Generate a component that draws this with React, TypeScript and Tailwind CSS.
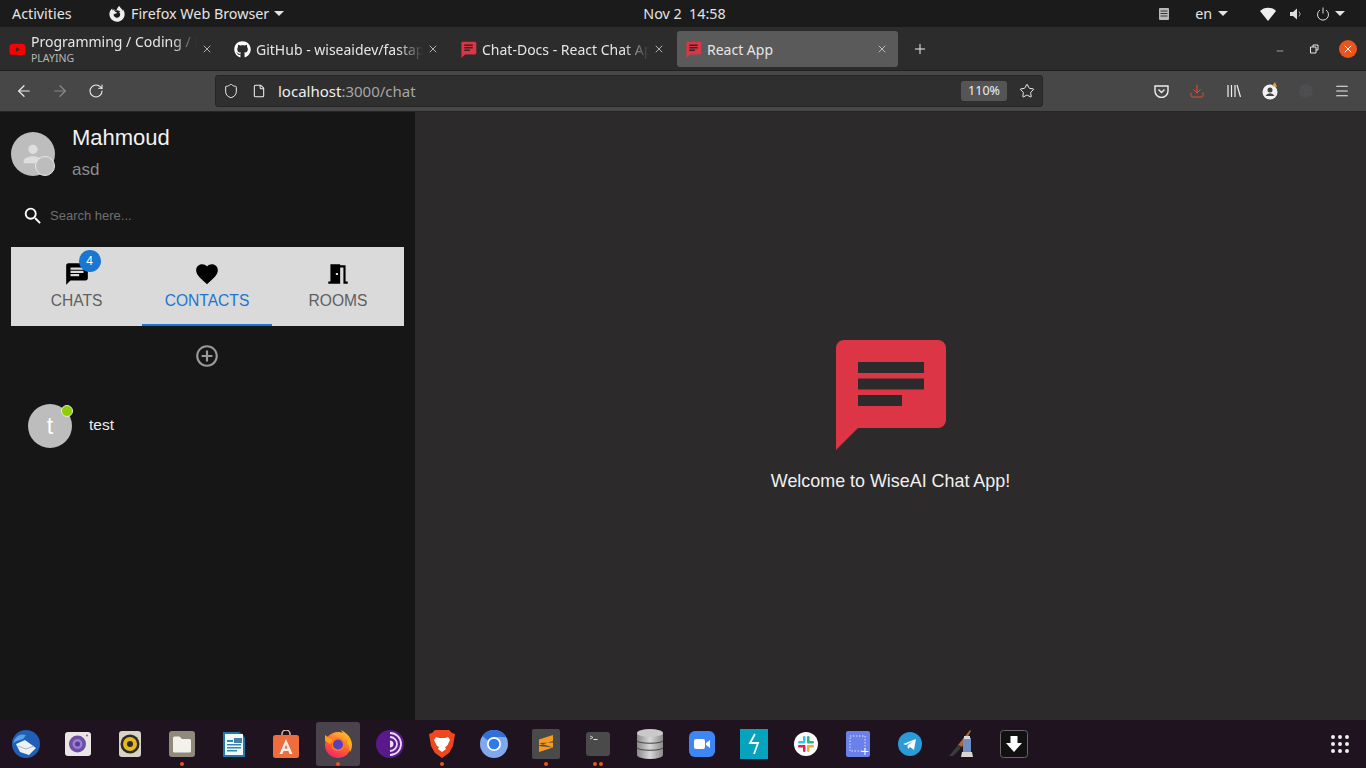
import { ArrowLeft, ArrowRight, RotateCw, Shield, File, Star, Download, Menu, X, Plus, Minus } from "lucide-react";
import { FaGithub, FaYoutube, FaFirefoxBrowser } from "react-icons/fa";
import { MdChat, MdFavorite, MdMeetingRoom, MdAddCircleOutline, MdPerson, MdSearch } from "react-icons/md";

const uiFont = "font-['Noto_Sans','Open_Sans',sans-serif]";

const ChatIcon = ({ size = 18 }: { size?: number }) => (
    <svg width={size} height={size} viewBox="0 0 24 24">
        <path d="M3 1h18a2 2 0 0 1 2 2v14a2 2 0 0 1-2 2H7l-5 5V3a2 2 0 0 1 1-2z" fill="#dc3545" />
        <path d="M6 5h12v2H6zM6 8.500h12v2H6zM6 12h8v2H6z" fill="#2c2a2b" />
    </svg>
);

const Tab = ({ title, sub, icon, w, active }: { title: string; sub?: string; icon: React.ReactNode; w: string; active?: boolean }) => (
    <div className={`flex h-9 shrink-0 items-center rounded-[3px] ${w} ${active ? "bg-[#5a5a5a] pl-[8px]" : "pl-[9px]"}`}>
        <div className="mr-[5px] flex w-[17px] justify-center">{icon}</div>
        <div className={`min-w-0 flex-1 overflow-hidden whitespace-nowrap ${sub ? "" : "pt-[2px]"}`}>
            <div className={`text-[14px] leading-[18px] text-[#e6e6e6] ${active ? "" : "[mask-image:linear-gradient(to_right,black_85%,transparent)]"}`}>{title}</div>
            {sub && <div className="mt-[1px] text-[10.5px] leading-[13px] text-[#b8b8b8]">{sub}</div>}
        </div>
        <X size={12} strokeWidth={1.5} className={`ml-[4px] shrink-0 text-[#dddddd] ${active ? "mr-[10px]" : "mr-[12px]"}`} />
    </div>
);

const dockIcons: { key: string; dots?: number; active?: boolean; node: React.ReactNode }[] = [
    {
        key: "thunderbird",
        node: (
            <svg width="30" height="30" viewBox="0 0 30 30">
                <circle cx="15" cy="15" r="14" fill="#1f5fb5" />
                <path d="M2 14C4 7 10 4 15 6l-3 4-6 2z" fill="#5aa2e6" />
                <path d="M5 15l9-4 11 8-7 7-9-3z" fill="#eef2f7" />
                <path d="M7 17l8 3 8-3" stroke="#a9b6c8" fill="none" />
            </svg>
        ),
    },
    {
        key: "cheese",
        node: (
            <svg width="26" height="24" viewBox="0 0 26 24">
                <rect width="26" height="24" y="0" rx="3" fill="#e9e6e6" />
                <circle cx="12.500" cy="12" r="8.500" fill="#6d4ea5" />
                <circle cx="12.500" cy="12" r="5" fill="#9a7fd0" />
                <circle cx="12.500" cy="12" r="2.500" fill="#5a3c92" />
                <circle cx="22" cy="3.500" r="1" fill="#d64550" />
            </svg>
        ),
    },
    {
        key: "rhythmbox",
        node: (
            <svg width="22" height="26" viewBox="0 0 22 26">
                <rect width="22" height="26" rx="3" fill="#d8d3c4" />
                <circle cx="11" cy="13" r="9.500" fill="#2c2a26" />
                <circle cx="11" cy="13" r="7" fill="#e6b91e" />
                <circle cx="11" cy="13" r="3" fill="#2c2a26" />
            </svg>
        ),
    },
    {
        key: "files",
        dots: 1,
        node: (
            <svg width="26" height="26" viewBox="0 0 26 26">
                <rect width="26" height="26" rx="3" fill="#8f8a7b" />
                <path d="M4 7a1.500 1.500 0 0 1 1.500-1.500h5L13 8h7.500A1.500 1.500 0 0 1 22 9.500V20a1.500 1.500 0 0 1-1.500 1.500h-15A1.500 1.500 0 0 1 4 20z" fill="#f3f1ec" />
            </svg>
        ),
    },
    {
        key: "writer",
        node: (
            <svg width="22" height="26" viewBox="0 0 22 26">
                <path d="M0 1h16l6 6v18a1 1 0 0 1-1 1H1a1 1 0 0 1-1-1z" fill="#1f7ba8" />
                <path d="M16 0l6 6h-6z" fill="#135b80" />
                <rect x="2" y="3" width="18" height="21" fill="#f5f8fa" />
                <rect x="4" y="9" width="6" height="2" fill="#2b87b6" />
                <rect x="4" y="13" width="14" height="1.500" fill="#2b87b6" />
                <rect x="4" y="16" width="14" height="1.500" fill="#2b87b6" />
                <rect x="4" y="19" width="10" height="1.500" fill="#2b87b6" />
                <rect x="11" y="7" width="8" height="5" fill="#4b7fa3" />
            </svg>
        ),
    },
    {
        key: "software",
        node: (
            <svg width="26" height="28" viewBox="0 0 26 28">
                <path d="M9 6V4a4 4 0 0 1 8 0v2" stroke="#e6b8a0" strokeWidth="1.500" fill="none" />
                <rect y="5" width="26" height="23" rx="2.500" fill="#ed6d3c" />
                <path d="M13 9l6.500 15h-3l-1-3h-5l-1 3h-3zM13 14.500l-1.500 4h3z" fill="#f8ede6" />
            </svg>
        ),
    },
    {
        key: "firefox",
        dots: 1,
        active: true,
        node: <FirefoxLogo />,
    },
    {
        key: "tor",
        node: (
            <svg width="28" height="28" viewBox="0 0 28 28">
                <circle cx="14" cy="14" r="14" fill="#59198a" />
                <path d="M14 3a11 11 0 0 1 0 22" stroke="#e9d9f5" strokeWidth="1.800" fill="none" />
                <path d="M14 7a7 7 0 0 1 0 14" stroke="#e9d9f5" strokeWidth="1.800" fill="none" />
                <path d="M14 10.500a3.500 3.500 0 0 1 0 7z" fill="#e9d9f5" />
            </svg>
        ),
    },
    {
        key: "brave",
        dots: 1,
        node: (
            <svg width="26" height="28" viewBox="0 0 26 28">
                <path d="M6 0h14l3 3 3 1-2 12-4 7-7 5-7-5-4-7L0 4l3-1z" fill="#f0471f" />
                <path d="M7 7l3 1h6l3-1 2 3-3 6-2 1 1 2-4 3-4-3 1-2-2-1-3-6z" fill="#fff" />
            </svg>
        ),
    },
    {
        key: "chromium",
        node: (
            <svg width="28" height="28" viewBox="0 0 28 28">
                <circle cx="14" cy="14" r="14" fill="#7fa8ef" />
                <path d="M14 0a14 14 0 0 1 12.100 7H14a7 7 0 0 0-6 3.500L2.400 6A14 14 0 0 1 14 0z" fill="#2f6fdb" />
                <circle cx="14" cy="14" r="7" fill="#fff" />
                <circle cx="14" cy="14" r="5.300" fill="#2f7bea" />
            </svg>
        ),
    },
    {
        key: "sublime",
        dots: 1,
        node: (
            <svg width="28" height="30" viewBox="0 0 28 30">
                <rect width="28" height="30" rx="2" fill="#4a4a4a" />
                <path d="M21 6v6L7 16.500v-6zM7 14l14 4.500v-5zM21 18.500L7 23v-6z" fill="#f89a1c" />
            </svg>
        ),
    },
    {
        key: "terminal",
        dots: 2,
        node: (
            <svg width="24" height="24" viewBox="0 0 24 24">
                <rect width="24" height="24" rx="3" fill="#4a4a4a" />
                <path d="M4 4l3 1.500L4 7" stroke="#e6e6e6" strokeWidth="0.800" fill="none" />
                <rect x="7.500" y="7" width="4" height="1" fill="#e6e6e6" />
            </svg>
        ),
    },
    {
        key: "database",
        node: (
            <svg width="26" height="30" viewBox="0 0 26 30">
                <defs>
                    <linearGradient id="db" x1="0" y1="0" x2="1" y2="0">
                        <stop offset="0" stopColor="#8a8a8a" />
                        <stop offset="0.500" stopColor="#d8d8d8" />
                        <stop offset="1" stopColor="#8a8a8a" />
                    </linearGradient>
                </defs>
                <rect y="4" width="26" height="22" fill="url(#db)" />
                <ellipse cx="13" cy="26" rx="13" ry="4" fill="url(#db)" />
                <path d="M0 12c3 3 23 3 26 0M0 19c3 3 23 3 26 0" stroke="#444" fill="none" />
                <ellipse cx="13" cy="4" rx="13" ry="4" fill="#c9c9c9" />
            </svg>
        ),
    },
    {
        key: "zoom",
        node: (
            <svg width="26" height="26" viewBox="0 0 26 26">
                <rect width="26" height="26" rx="6" fill="#3f86f5" />
                <rect x="5" y="8" width="11" height="10" rx="2" fill="#fff" />
                <path d="M17 12l4-3v8l-4-3z" fill="#fff" />
            </svg>
        ),
    },
    {
        key: "postman",
        node: (
            <svg width="28" height="30" viewBox="0 0 28 30">
                <rect width="28" height="30" fill="#05a3bd" />
                <path d="M15 5l-5 9h8l-4 11" stroke="#fff" strokeWidth="1.800" fill="none" />
            </svg>
        ),
    },
    {
        key: "slack",
        node: (
            <svg width="24" height="24" viewBox="0 0 24 24">
                <circle cx="12" cy="12" r="12" fill="#fff" />
                <rect x="9" y="4" width="2.500" height="7" rx="1.200" fill="#36c5f0" />
                <rect x="4" y="9" width="7" height="2.500" rx="1.200" fill="#36c5f0" />
                <rect x="13" y="4" width="2.500" height="7" rx="1.200" fill="#2eb67d" />
                <rect x="13" y="9" width="7" height="2.500" rx="1.200" fill="#2eb67d" />
                <rect x="13" y="13" width="7" height="2.500" rx="1.200" fill="#ecb22e" />
                <rect x="13" y="13" width="2.500" height="7" rx="1.200" fill="#ecb22e" />
                <rect x="9" y="13" width="2.500" height="7" rx="1.200" fill="#e01e5a" />
                <rect x="4" y="13" width="7" height="2.500" rx="1.200" fill="#e01e5a" />
            </svg>
        ),
    },
    {
        key: "screenshot",
        node: (
            <svg width="24" height="26" viewBox="0 0 24 26">
                <rect width="24" height="26" rx="2" fill="#6a80ea" />
                <rect x="4" y="5" width="15" height="15" fill="none" stroke="#dfe5ff" strokeDasharray="1.500 1.500" />
                <path d="M19 17v7M15.500 20.500h7" stroke="#fff" />
            </svg>
        ),
    },
    {
        key: "telegram",
        node: (
            <svg width="24" height="24" viewBox="0 0 24 24">
                <circle cx="12" cy="12" r="12" fill="#2a9bd6" />
                <path d="M5 12l13-5-2 11-4-3-2 2-.500-3.500 5.500-4.500-7 4z" fill="#fff" />
            </svg>
        ),
    },
    {
        key: "gimp",
        node: (
            <svg width="26" height="28" viewBox="0 0 26 28">
                <path d="M0 26l9-11 3 3-8 8z" fill="#3a3a3a" />
                <path d="M9 15l12-15 1 1-9 16z" fill="#a8683a" />
                <rect x="14" y="8" width="8" height="14" fill="#6f8fc4" />
                <rect x="15" y="6" width="6" height="3" fill="#d8d8d8" />
                <path d="M13 22h10l1 5H12z" fill="#d9d6cd" />
            </svg>
        ),
    },
    {
        key: "downloader",
        node: (
            <svg width="28" height="28" viewBox="0 0 28 28">
                <rect x="0.500" y="0.500" width="27" height="27" rx="3" fill="#111" stroke="#666" />
                <path d="M10.500 6h7v7H22l-8 9-8-9h4.500z" fill="#fff" />
            </svg>
        ),
    },
];

function FirefoxLogo() {
    return (
        <svg width="28" height="28" viewBox="0 0 28 28">
            <defs>
                <linearGradient id="ff" x1="0.800" y1="0" x2="0.300" y2="1">
                    <stop offset="0" stopColor="#ffc52e" />
                    <stop offset="0.550" stopColor="#ff5f2e" />
                    <stop offset="1" stopColor="#f0246e" />
                </linearGradient>
            </defs>
            <circle cx="14" cy="15" r="13" fill="url(#ff)" />
            <path d="M17 0c6 3 11 8 11 15 0 3-1 5-2 7-1-8-4-14-9-22z" fill="#ffb01f" />
            <path d="M1 5l6 4 5-1-6 6-5-3z" fill="#ff9a1e" />
            <path d="M8 9c4-3 12-2 13 5 0 4-3 7-7 7s-7-3-6-6z" fill="#ff7a20" />
            <circle cx="14" cy="14.500" r="5" fill="#5b3fc0" />
        </svg>
    );
}

const App = () => {
    return (
        <div className={`flex h-screen w-full flex-col overflow-hidden bg-[#2c2a2b] ${uiFont}`}>
            {/* GNOME top bar */}
            <div className="flex h-[27px] shrink-0 items-center bg-[#1b1b1b] text-[14.3px] text-[#e4e4e4]">
                <span className="ml-3 w-[97px]">Activities</span>
                <FaFirefoxBrowser className="mr-[6px] text-[16px] text-[#eeeeee]" />
                <span>Firefox Web Browser</span>
                <span className="ml-[5px] h-0 w-0 border-x-[5px] border-t-[5px] border-x-transparent border-t-[#e4e4e4]" />
                <span className="ml-[359px] w-[107px]">Nov 2&nbsp;&nbsp;14:58</span>
                <svg className="ml-[407px]" width="14" height="14" viewBox="0 0 14 14">
                    <rect x="2" y="1" width="10" height="12" rx="1" fill="#b9b9b9" />
                    <path d="M3.500 4h7M3.500 6.500h7M3.500 9h7" stroke="#333" />
                </svg>
                <span className="ml-[24px]">en</span>
                <span className="ml-[6px] h-0 w-0 border-x-[5px] border-t-[5px] border-x-transparent border-t-[#e4e4e4]" />
                <svg className="ml-[32px]" width="16" height="14" viewBox="0 0 16 14">
                    <path d="M0 4c4-4.500 12-4.500 16 0l-8 10z" fill="#eeeeee" />
                </svg>
                <svg className="ml-[13px]" width="16" height="14" viewBox="0 0 16 14">
                    <path d="M1 5h3l4-3.500v11L4 9H1z" fill="#dddddd" />
                    <path d="M10 4.500a3.500 3.500 0 0 1 0 5" stroke="#999" fill="none" />
                </svg>
                <svg className="ml-[11px]" width="14" height="14" viewBox="0 0 14 14">
                    <path d="M4 3a5.500 5.500 0 1 0 6 0M7 0.500v6" stroke="#dddddd" fill="none" />
                </svg>
                <span className="ml-[5px] h-0 w-0 border-x-[5px] border-t-[5px] border-x-transparent border-t-[#e4e4e4]" />
            </div>

            {/* Tab strip */}
            <div className="flex h-[44px] shrink-0 items-center border-b border-[#1f1f1f] bg-[#2c2c2c] pt-px">
                <Tab title="Programming / Coding / H" sub="PLAYING" w="w-[225px]" icon={<FaYoutube className="text-[17px] text-[#ff0000]" />} />
                <Tab title="GitHub - wiseaidev/fastap" w="w-[226px]" icon={<FaGithub className="text-[17px] text-white" />} />
                <Tab title="Chat-Docs - React Chat Ap" w="w-[226px]" icon={<ChatIcon size={17} />} />
                <Tab title="React App" w="w-[221px]" active icon={<ChatIcon size={17} />} />
                <Plus size={16} strokeWidth={1.5} className="ml-[14px] text-[#eeeeee]" />
                <Minus size={10} strokeWidth={1.5} className="ml-[347px] mt-[4px] text-[#e6e6e6]" />
                <svg className="ml-[25px]" width="9" height="10" viewBox="0 0 9 10">
                    <path d="M0.500 3h5.500v6H0.500zM3 3V1h5v5H6" stroke="#e6e6e6" fill="none" />
                </svg>
                <div className="ml-[20px] flex h-[18px] w-[18px] items-center justify-center rounded-full bg-[#e9541f]">
                    <X size={12} className="text-white" strokeWidth={2} />
                </div>
            </div>

            {/* Navigation bar */}
            <div className="flex h-[41px] shrink-0 items-center border-b border-[#262626] bg-[#474747] text-[#eeeeee]">
                <ArrowLeft size={18} strokeWidth={1.6} className="ml-[15px]" />
                <ArrowRight size={18} strokeWidth={1.6} className="ml-[18px] text-[#8a8a8a]" />
                <RotateCw size={16} strokeWidth={1.6} className="ml-[19px]" />
                <div className="ml-[111px] flex h-8 w-[828px] items-center rounded-[3px] border border-[#252525] bg-[#2f2f2f]">
                    <Shield size={16} strokeWidth={1.5} className="ml-[7px]" />
                    <File size={14} strokeWidth={1.8} className="ml-[13px]" />
                    <span className="ml-[12px] text-[15px] text-[#eeeeee]">
                        localhost<span className="text-[#a6a6a6]">:3000/chat</span>
                    </span>
                    <span className="ml-auto flex h-5 w-[46px] items-center justify-center rounded-[3px] bg-[#555555] text-[12.5px]">110%</span>
                    <Star size={16} strokeWidth={1.5} className="mx-[7px] ml-[12px]" />
                </div>
                <svg className="ml-[111px]" width="15" height="14" viewBox="0 0 15 14">
                    <path d="M1 2h13v5a6.500 6.500 0 0 1-13 0z" fill="none" stroke="#eeeeee" strokeWidth="1.400" />
                    <path d="M4.500 5.500l3 3 3-3" fill="none" stroke="#eeeeee" strokeWidth="1.400" />
                </svg>
                <Download size={16} strokeWidth={1.5} className="ml-[20px] text-[#d9542b]" />
                <svg className="ml-[22px]" width="14" height="14" viewBox="0 0 14 14">
                    <path d="M1 1v12M4.500 1v12M8 1v12M10 1l3.500 12" stroke="#eeeeee" strokeWidth="1.200" fill="none" />
                </svg>
                <svg className="ml-[21px]" width="16" height="18" viewBox="0 0 16 18">
                    <circle cx="8" cy="10" r="7.500" fill="#f2f2f2" />
                    <circle cx="8" cy="8" r="2.500" fill="#444" />
                    <path d="M3.500 14a5 5 0 0 1 9 0z" fill="#444" />
                    <path d="M10 4l3-4 2 5z" fill="#ee9a3a" />
                </svg>
                <span className="ml-[21px] h-[14px] w-[14px] rounded-full bg-[#4d4d4f] text-center text-[8px] leading-[14px] text-[#2f6f9f]">:</span>
                <Menu size={16} strokeWidth={1.6} className="ml-[21px]" />
            </div>

            {/* App */}
            <div className="flex min-h-0 flex-1 font-['Liberation_Sans',sans-serif]">
                <div className="flex w-[415px] shrink-0 flex-col bg-[#161616] px-[11px]">
                    <div className="flex h-[74px] shrink-0">
                        <div className="relative mt-[20px] flex h-11 w-11 items-center justify-center rounded-full bg-[#bdbdbd]">
                            <MdPerson className="text-[28px] text-[#dedede]" />
                            <span className="absolute bottom-0 right-0 h-[20px] w-[20px] rounded-full border border-[#e8e8e8] bg-[#bdbdbd]" />
                        </div>
                        <div className="ml-[17px]">
                            <div className="mt-[12px] text-[22px] leading-[28px] text-[#f2f2f2]">Mahmoud</div>
                            <div className="mt-[8px] text-[17px] leading-[20px] text-[#8c8c8c]">asd</div>
                        </div>
                    </div>
                    <div className="mt-[6px] flex h-[48px] shrink-0 items-center pl-[11px]">
                        <MdSearch className="text-[22px] text-white" />
                        <span className="ml-[6px] text-[13px] text-[#6f6f6f]">Search here...</span>
                    </div>
                    <div className="mt-[7px] grid h-[79px] w-[393px] shrink-0 grid-cols-[131px_130px_132px] bg-[#dadada]">
                        <div className="flex flex-col items-center pt-[14px] text-[#5f5f5f]">
                            <div className="relative">
                                <MdChat className="text-[26px] text-black" />
                                <span className="absolute -right-[11px] -top-[11px] flex h-[22px] w-[22px] items-center justify-center rounded-full bg-[#1976d2] text-[12px] text-white">4</span>
                            </div>
                            <span className="mt-[3px] text-[15.6px] leading-[22px]">CHATS</span>
                        </div>
                        <div className="flex flex-col items-center border-b-2 border-[#1976d2] pt-[14px] text-[#1976d2]">
                            <MdFavorite className="text-[26px] text-black" />
                            <span className="mt-[3px] text-[15.6px] leading-[22px]">CONTACTS</span>
                        </div>
                        <div className="flex flex-col items-center pt-[14px] text-[#5f5f5f]">
                            <MdMeetingRoom className="text-[26px] text-black" />
                            <span className="mt-[3px] text-[15.6px] leading-[22px]">ROOMS</span>
                        </div>
                    </div>
                    <div className="mt-[17px] flex shrink-0 justify-center pr-px">
                        <MdAddCircleOutline className="text-[26px] text-[#9a9a9a]" />
                    </div>
                    <div className="ml-[17px] mt-[35px] flex items-center">
                        <div className="relative flex h-11 w-11 items-center justify-center rounded-full bg-[#bdbdbd] text-[23px] text-white">
                            t
                            <span className="absolute right-[-1px] top-[1px] h-3 w-3 rounded-full border border-[#e8e8e8] bg-[#8fce00]" />
                        </div>
                        <span className="ml-[17px] -mt-[2px] text-[15.5px] text-[#ededed]">test</span>
                    </div>
                </div>

                <div className="flex flex-1 flex-col items-center pt-[228px]">
                    <svg width="110" height="110" viewBox="0 0 110 110">
                        <path d="M8 0h94a8 8 0 0 1 8 8v72a8 8 0 0 1-8 8H22L0 110V8a8 8 0 0 1 8-8z" fill="#dc3545" />
                        <path d="M22 22h66v11H22zM22 38.500h66v11H22zM22 55h44v11H22z" fill="#2c2a2b" />
                    </svg>
                    <div className="mt-[20px] text-[17.9px] leading-[22px] text-[#f0f0f0]">Welcome to WiseAI Chat App!</div>
                </div>
            </div>

            {/* Dock */}
            <div className={`flex h-[48px] shrink-0 items-center bg-[#1f1320] ${uiFont}`}>
                {dockIcons.map((d) => (
                    <div key={d.key} className="relative flex h-[44px] w-[52px] shrink-0 items-center justify-center">
                        {d.active && <div className="absolute inset-y-0 left-[4px] right-[4px] rounded-[3px] bg-[#4a434c]" />}
                        <div className="relative flex">{d.node}</div>
                        {d.dots ? (
                            <div className="absolute bottom-0 flex gap-[2px]">
                                {Array.from({ length: d.dots }).map((_, i) => (
                                    <span key={i} className="h-1 w-1 rounded-full bg-[#e9541f]" />
                                ))}
                            </div>
                        ) : null}
                    </div>
                ))}
                <div className="ml-auto mr-[17px] grid grid-cols-3 gap-[3px]">
                    {Array.from({ length: 9 }).map((_, i) => (
                        <span key={i} className="h-[4px] w-[4px] rounded-full bg-[#eeeeee]" />
                    ))}
                </div>
            </div>
        </div>
    );
};

export default App;
